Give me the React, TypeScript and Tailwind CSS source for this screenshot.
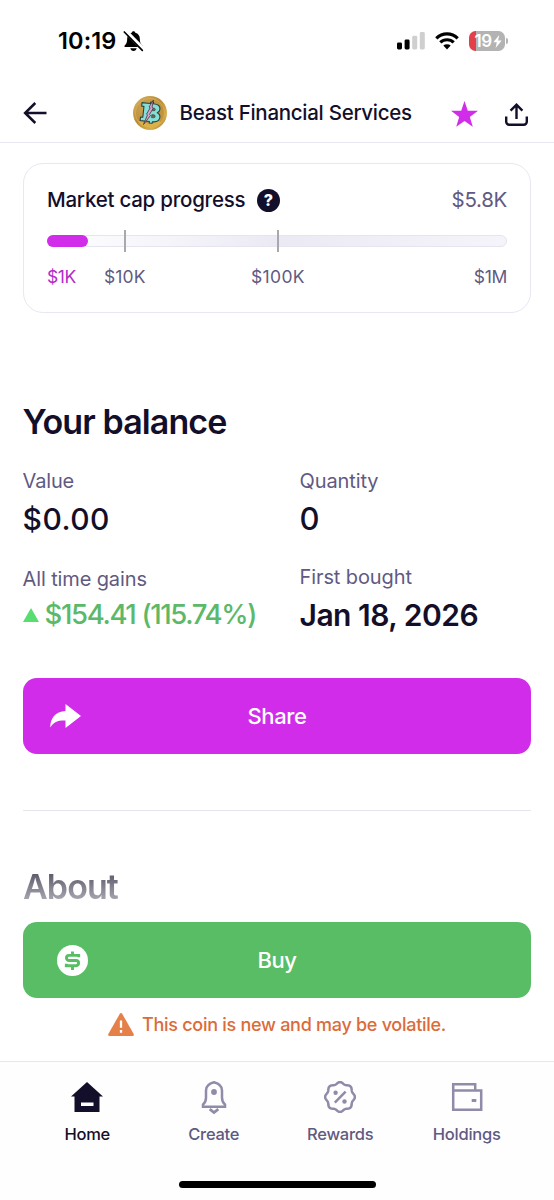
import React from "react";

function StatusBar() {
  return (
    <div className="flex h-[82px] items-center pl-[58px] pr-[46px]">
      <span className="w-[60px] whitespace-nowrap text-[23.500px] font-semibold leading-[28px] tracking-[0.100px] text-black">10:19</span>
      <svg className="ml-[5px]" width="21" height="22" viewBox="0 0 21 22">
        <path d="M10.5 1.2c-1 0-1.7.7-1.8 1.5C5.800 3.500 4.200 5.700 4.200 8.500c0 4-1 5.500-2.300 6.700-.8.8-.5 1.800.6 1.800h16c1.100 0 1.400-1 .6-1.800-1.300-1.200-2.300-2.700-2.300-6.700 0-2.800-1.600-5-4.500-5.800-.1-.8-.8-1.500-1.800-1.500zM7.300 18.300h6.400c-.3 1.600-1.600 2.700-3.200 2.700s-2.900-1.100-3.200-2.700z" fill="#000" />
        <path d="M2.400 1l18 18.300" stroke="#fff" strokeWidth="4.200" />
        <path d="M1.300 2l18 18.300" stroke="#000" strokeWidth="1.700" strokeLinecap="round" />
      </svg>
      <svg className="ml-auto" width="28" height="18" viewBox="0 0 28 18">
        <rect x="0" y="10.500" width="5" height="7" rx="1.400" />
        <rect x="7.600" y="7.500" width="5" height="10" rx="1.400" />
        <rect x="15.200" y="3.800" width="5" height="13.700" rx="1.400" fill="#cfcfcf" />
        <rect x="22.800" y="0" width="5" height="17.500" rx="1.400" fill="#cfcfcf" />
      </svg>
      <svg className="ml-[10px]" width="24" height="18" viewBox="0 0 24 18">
        <path d="M1.300 6.300a15.300 15.300 0 0 1 21.400 0" fill="none" stroke="#000" strokeWidth="3.200" />
        <path d="M5.300 10.400a9.600 9.600 0 0 1 13.400 0" fill="none" stroke="#000" strokeWidth="3.100" />
        <path d="M8.300 13.600a5.400 5.400 0 0 1 7.400 0L12 17.500z" fill="#000" />
      </svg>
      <div className="ml-[10px] flex h-[20px] w-[35.500px] items-center justify-end overflow-hidden rounded-[6.500px] bg-[linear-gradient(90deg,#e2414a_0,#e2414a_7px,#b3b3b3_7px)] pr-[3px]">
        <span className="text-[17px] font-semibold leading-none tracking-[-0.500px] text-white">19</span>
        <svg className="ml-[1px]" width="9" height="13" viewBox="0 0 9 13">
          <path d="M6.300 0L.3 7.300h3.500L2.600 13 8.700 5.500H5.100z" fill="#fff" />
        </svg>
      </div>
      <div className="ml-[1.500px] h-[6px] w-[2px] rounded-r-full bg-[#b3b3b3]" />
    </div>
  );
}

function Coin() {
  return (
    <svg width="36" height="36" viewBox="0 0 36 36">
      <defs>
        <linearGradient id="rim" x1="0" y1="0" x2="1" y2="1">
          <stop offset="0" stopColor="#dcb866" />
          <stop offset="0.450" stopColor="#b98a33" />
          <stop offset="0.750" stopColor="#d9ad4a" />
          <stop offset="1" stopColor="#a5752a" />
        </linearGradient>
        <radialGradient id="face" cx="0.400" cy="0.300" r="0.800">
          <stop offset="0" stopColor="#d0a955" />
          <stop offset="0.600" stopColor="#bd9140" />
          <stop offset="1" stopColor="#c99a38" />
        </radialGradient>
      </defs>
      <circle cx="18" cy="18" r="17" fill="url(#rim)" />
      <circle cx="18" cy="18" r="14.600" fill="url(#face)" stroke="#dcb75f" strokeWidth="0.600" />
      <path d="M6 26a14.600 14.600 0 0 0 23 1.500l-3-2.500-7 4z" fill="#e6bd4f" opacity="0.700" />
      <g transform="rotate(6 18 18)">
        <path d="M9 8.500h8.500V7h3v1.500c4.500 0 7 1.600 7 4.600 0 1.900-.9 3.100-2.400 3.800 2 .7 3.200 2.100 3.200 4.300 0 3.400-2.600 5.300-7 5.300V28h-3v-1.500H9v-3.500h2.300V12H9z" fill="#83dfd8" stroke="#2c4440" strokeWidth="1.100" strokeLinejoin="round" />
        <path d="M20 12.800h1.500c2 0 2 2.600 0 2.600H20zM20 19.400h1.900c2.200 0 2.200 3 0 3H20z" fill="#6c6a48" stroke="#2c4440" strokeWidth="0.600" />
      </g>
      <path d="M21.500 5L17 12l1.200.8-3.700 6.400 1 .7-4 9.600 7-9-1-1 3.700-6.200-1.200-1z" fill="#d9a3c8" stroke="#4a2e42" strokeWidth="0.800" />
    </svg>
  );
}

function Header() {
  return (
    <header className="flex h-[61px] items-center border-b border-[#e8e7f2] pl-[23px] pr-[26px] pt-[1px]">
      <svg width="24" height="22" viewBox="0 0 24 22" fill="none" stroke="#130f2a" strokeWidth="2.500">
        <path d="M12.300 1L2.100 11l10.200 10M2.100 11H23.500" />
      </svg>
      <div className="ml-[85px] flex items-center">
        <Coin />
        <h1 className="ml-[11.500px] whitespace-nowrap text-[20.500px] font-medium leading-[28px] tracking-[-0.280px] text-[#130f2a]">Beast Financial Services</h1>
      </div>
      <svg className="ml-auto mt-[2px]" width="27" height="26" viewBox="0 0 27 26">
        <path d="M13.500 0l3.300 9.700 10.200.1-8.200 6.200 3 9.800-8.300-5.900-8.300 5.900 3-9.800L0 9.800l10.200-.1z" fill="#d02ce9" />
      </svg>
      <svg className="ml-[27px] mt-[3px]" width="23" height="23" viewBox="0 0 23 23" fill="none" stroke="#130f2a" strokeWidth="2.400">
        <path d="M1.200 13.500v5.300a3 3 0 0 0 3 3h14.600a3 3 0 0 0 3-3v-5.300M11.500 16V1.700M5.600 7.700l5.900-6 5.900 6" />
      </svg>
    </header>
  );
}

function MarketCap() {
  return (
    <section className="mx-[23px] mt-[20px] h-[150px] rounded-[20px] border border-[#e8e7f3] px-[23px] pt-[21px]">
      <div className="flex h-[30px] items-center">
        <h2 className="w-[210px] whitespace-nowrap text-[20.500px] font-medium tracking-[-0.240px] text-[#130f2a]">Market cap progress</h2>
        <span className="flex size-[23px] items-center justify-center rounded-full bg-[#130f2a] text-[16px] font-extrabold leading-none text-white">?</span>
        <span className="ml-auto text-[20.500px] tracking-[-0.300px] text-[#5f5a82]">$5.8K</span>
      </div>
      <div className="relative mt-[20px] h-[12px] rounded-full border border-[#e6e5ef] bg-[linear-gradient(90deg,#fbfbfd_10%,#ebeaf4_50%,#f5f4fa_100%)]">
        <div className="absolute -left-px -top-px h-[12px] w-[41px] rounded-full bg-[#d02ce9]" />
        <div className="absolute left-[76px] top-[-6px] h-[22px] w-[2px] bg-[#a9a9ad]" />
        <div className="absolute left-[229px] top-[-6px] h-[22px] w-[2px] bg-[#a9a9ad]" />
      </div>
      <div className="mt-[18px] flex h-[24px] items-center text-[17.500px] text-[#5f5a82]">
        <span className="w-[57px] tracking-[-0.400px] text-[#b42bc9]">$1K</span>
        <span className="w-[147px] tracking-[0.100px]">$10K</span>
        <span className="tracking-[0.350px]">$100K</span>
        <span className="ml-auto tracking-[-0.300px]">$1M</span>
      </div>
    </section>
  );
}

function Balance() {
  return (
    <section className="ml-[22.500px] mr-[23px] mt-[89px]">
      <h2 className="h-[40px] text-[34px] font-semibold leading-[40px] tracking-[-0.900px] text-[#130f2a]">Your balance</h2>
      <div className="mt-[26px] flex">
        <div className="w-[277px]">
          <p className="text-[20px] leading-[26px] tracking-[-0.150px] text-[#5f5a82]">Value</p>
          <p className="mt-[5px] text-[30px] font-medium leading-[40px] tracking-[0.500px] text-[#130f2a]">$0.00</p>
          <p className="mt-[27px] text-[20px] leading-[26px] tracking-[-0.120px] text-[#5f5a82]">All time gains</p>
          <div className="mt-[3px] flex h-[40px] items-center">
            <svg width="16" height="14" viewBox="0 0 16 14"><path d="M8 0l8 14H0z" fill="#58dd70" /></svg>
            <span className="ml-[6px] whitespace-nowrap text-[27.500px] font-medium tracking-[-1.350px] text-[#5bb969]">$154.41 (115.74%)</span>
          </div>
        </div>
        <div>
          <p className="text-[20px] leading-[26px] tracking-[-0.100px] text-[#5f5a82]">Quantity</p>
          <p className="mt-[5px] text-[31px] font-medium leading-[40px] text-[#130f2a]">0</p>
          <p className="mt-[25px] text-[20px] leading-[26px] tracking-[-0.100px] text-[#5f5a82]">First bought</p>
          <p className="mt-[5px] whitespace-nowrap text-[30px] font-semibold leading-[40px] tracking-[-0.500px] text-[#130f2a]">Jan 18, 2026</p>
        </div>
      </div>
    </section>
  );
}

function Actions() {
  return (
    <section className="mx-[23px] mt-[43px]">
      <button className="grid h-[76px] w-full grid-cols-[60px_1fr_60px] items-center rounded-[14px] bg-[#d02ce9] text-[22px] font-medium tracking-[-0.400px] text-white">
        <svg className="ml-[26.500px]" width="31" height="24" viewBox="0 0 31 24"><path d="M15.500 0L31 12 15.500 24v-7.500C8 16.300 3.500 18 .3 23.500 0 14.500 5.500 7.500 15.500 7z" fill="#fff" /></svg>
        <span>Share</span>
      </button>
      <div className="mt-[56px] h-px bg-[#e6e5ec]" />
      <h2 className="mt-[56px] h-[40px] w-[120px] bg-[linear-gradient(180deg,#5c5a69_15%,#b0afb8_90%)] bg-clip-text text-[34px] font-semibold leading-[40px] tracking-[-0.900px] text-transparent">About</h2>
      <button className="mt-[15px] grid h-[76px] w-full grid-cols-[65px_1fr_65px] items-center rounded-[14px] bg-[#58bd65] text-[22px] font-medium tracking-[-0.500px] text-white">
        <svg className="ml-[33.500px]" width="31" height="31" viewBox="0 0 31 31">
          <circle cx="15.500" cy="15.500" r="15.500" fill="#fff" />
          <path d="M15.500 6.500v3.500M15.500 21v4M21.700 12.300v-1.900H12a2.550 2.550 0 0 0 0 5.100h7a2.600 2.600 0 0 1 0 5.200H9.300v-1.900" fill="none" stroke="#58bd65" strokeWidth="2.900" />
        </svg>
        <span>Buy</span>
      </button>
      <div className="mt-[13px] flex h-[26px] items-center justify-center text-[#dc6b38]">
        <svg width="26" height="23" viewBox="0 0 26 23">
          <path d="M11.800.8q1.200-1.600 2.400 0L25.700 21q.7 2-1.300 2H1.600q-2 0-1.300-2z" fill="#e58049" />
          <path d="M13 7.500v7.300M13 17v2.800" stroke="#fff" strokeWidth="2.300" />
        </svg>
        <span className="ml-[8px] whitespace-nowrap text-[18px] font-medium tracking-[-0.280px]">This coin is new and may be volatile.</span>
      </div>
    </section>
  );
}

function sealPath() {
  const points: string[] = [];
  for (let i = 0; i <= 96; i += 1) {
    const angle = (i / 96) * Math.PI * 2;
    const radius = 14 + 0.9 * Math.cos(angle * 8);
    points.push(`${(16 + radius * Math.cos(angle)).toFixed(2)} ${(16 + radius * Math.sin(angle)).toFixed(2)}`);
  }
  return `M${points.join("L")}Z`;
}

function Tabs() {
  return (
    <nav className="mt-[24px] grid h-[139px] grid-cols-4 content-start border-t border-[#e8e7f0] bg-[#fefefe] px-[24px] pt-[19px] text-[16.500px] font-medium tracking-[-0.240px] text-[#5f5a82]">
      <div className="flex flex-col items-center">
        <svg width="32" height="32" viewBox="0 0 32 32"><path fillRule="evenodd" d="M16 1l16 14.500h-3.500V31h-25V15.500H0zM10 21.500v3.500h12.500v-3.500z" fill="#130f2a" /></svg>
        <span className="mt-[9px] leading-[24px] text-[#130f2a]">Home</span>
      </div>
      <div className="flex flex-col items-center">
        <svg width="32" height="34" viewBox="0 0 32 34" fill="none" stroke="#8f8ba9" strokeWidth="2.500">
          <path d="M8 16.500V9.500C8 4.800 12 2.300 16 1.300c4 1 8 3.500 8 8.200v7c0 3.500 1 5.500 3 7v2.300H5v-2.300C7 22 8 20 8 16.500z" />
          <circle cx="16" cy="11" r="2.900" fill="#8f8ba9" stroke="none" />
          <path d="M11.700 28.200L16 31.500l4.300-3.300" strokeWidth="2.800" />
        </svg>
        <span className="mt-[7px] leading-[24px]">Create</span>
      </div>
      <div className="flex flex-col items-center">
        <svg width="32" height="32" viewBox="0 0 32 32" fill="none" stroke="#8f8ba9" strokeWidth="2.500">
          <path d={sealPath()} strokeLinejoin="round" />
          <path d="M10.800 21.600L21.600 10.600" />
          <circle cx="11.600" cy="11.800" r="2.200" fill="#8f8ba9" stroke="none" />
          <circle cx="20.500" cy="20.500" r="2.200" fill="#8f8ba9" stroke="none" />
        </svg>
        <span className="mt-[9px] leading-[24px]">Rewards</span>
      </div>
      <div className="flex flex-col items-center">
        <svg width="32" height="32" viewBox="0 0 32 32" fill="none" stroke="#8f8ba9" strokeWidth="2.500">
          <path d="M2.200 9.500V3.200h22v6.300M2.200 9.500h28v19.300h-28z" />
          <path d="M20.700 19.500h4.600" strokeWidth="3" />
        </svg>
        <span className="mt-[9px] leading-[24px]">Holdings</span>
      </div>
      <div className="col-span-4 mt-[35px] h-[7px] w-[197px] justify-self-center rounded-full bg-black" />
    </nav>
  );
}

export default function App() {
  return (
    <main className="h-[1200px] w-[554px] overflow-hidden bg-white font-['Inter',sans-serif]">
      <StatusBar />
      <Header />
      <MarketCap />
      <Balance />
      <Actions />
      <Tabs />
    </main>
  );
}
